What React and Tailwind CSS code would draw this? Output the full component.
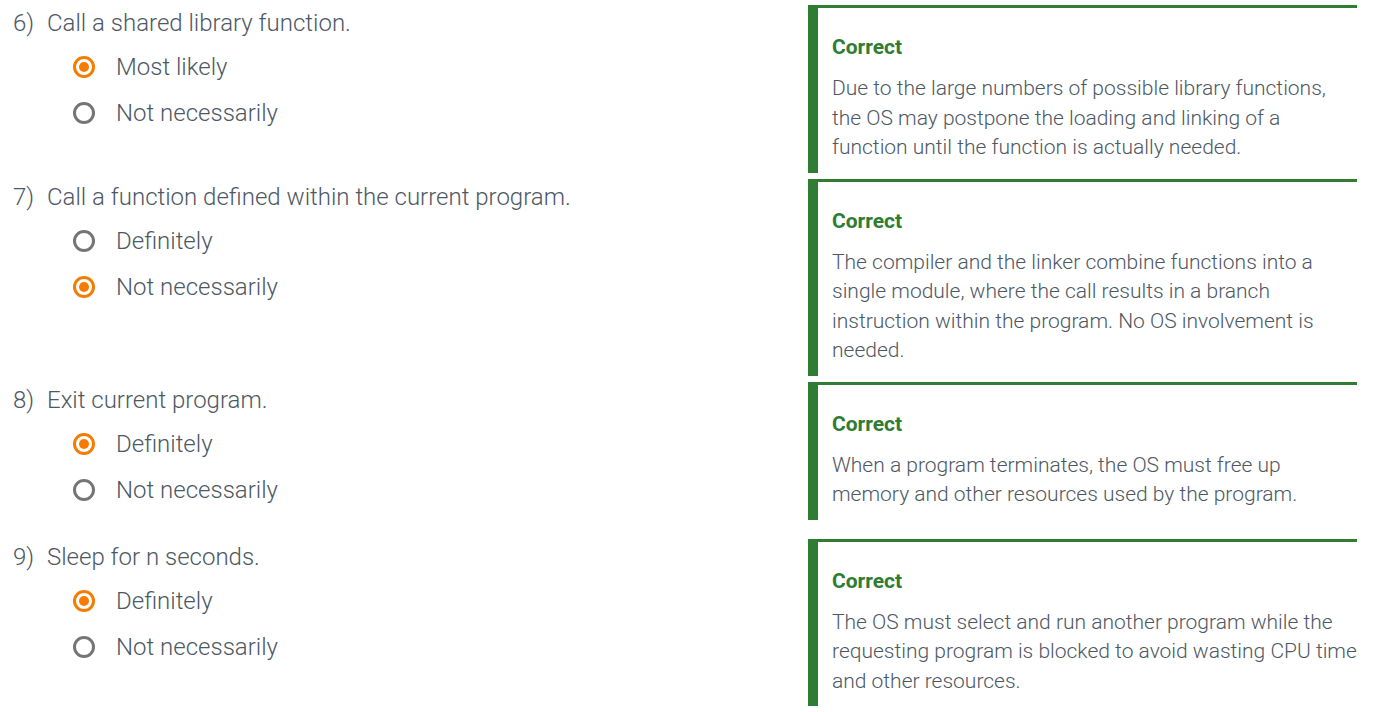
import React from 'react';

const questions = [
  {
    num: '6)',
    text: 'Call a shared library function.',
    options: ['Most likely', 'Not necessarily'],
    picked: 0,
    explain:
      'Due to the large numbers of possible library functions, the OS may postpone the loading and linking of a function until the function is actually needed.',
  },
  {
    num: '7)',
    text: 'Call a function defined within the current program.',
    options: ['Definitely', 'Not necessarily'],
    picked: 1,
    explain:
      'The compiler and the linker combine functions into a single module, where the call results in a branch instruction within the program. No OS involvement is needed.',
  },
  {
    num: '8)',
    text: 'Exit current program.',
    options: ['Definitely', 'Not necessarily'],
    picked: 0,
    explain:
      'When a program terminates, the OS must free up memory and other resources used by the program.',
  },
  {
    num: '9)',
    text: 'Sleep for n seconds.',
    options: ['Definitely', 'Not necessarily'],
    picked: 0,
    explain:
      'The OS must select and run another program while the requesting program is blocked to avoid wasting CPU time and other resources.',
  },
];

function Radio({ checked }) {
  if (checked) {
    return (
      <span className="w-[22px] h-[22px] rounded-full border-[3px] border-[#f57c00] flex items-center justify-center shrink-0">
        <span className="w-[10px] h-[10px] rounded-full bg-[#f57c00]" />
      </span>
    );
  }
  return <span className="w-[22px] h-[22px] rounded-full border-[3px] border-[#757575] shrink-0" />;
}

function Question({ q }) {
  return (
    <div className="flex items-start mb-[6px]">
      {/* question + choices */}
      <div className="w-[808px] shrink-0 pt-[6px] pb-[20px]">
        <div className="flex pl-[13px] text-[24px] leading-[24px]">
          <span className="w-[34px] shrink-0">{q.num}</span>
          <span>{q.text}</span>
        </div>
        <div className="mt-[9px] pl-[73px]">
          {q.options.map((opt, i) => (
            <div key={opt} className="h-[46px] flex items-center">
              <Radio checked={i === q.picked} />
              <span className="ml-[21px] text-[24px] leading-[24px]">{opt}</span>
            </div>
          ))}
        </div>
      </div>

      {/* feedback card */}
      <div className="w-[549px] shrink-0 border-l-[10px] border-t-[3px] border-[#2e7d32] pl-[14px] pt-[25px] pb-[10px]">
        <div className="text-[21px] leading-[28px] font-bold text-[#2e7d32]">Correct</div>
        <p className="mt-[13px] text-[21px] leading-[29.5px]">{q.explain}</p>
      </div>
    </div>
  );
}

export default function App() {
  return (
    <div className="min-h-screen bg-white pt-[5px] font-['Roboto',sans-serif] font-light text-[#4d5863]">
      {questions.map((q) => (
        <Question key={q.num} q={q} />
      ))}
    </div>
  );
}
